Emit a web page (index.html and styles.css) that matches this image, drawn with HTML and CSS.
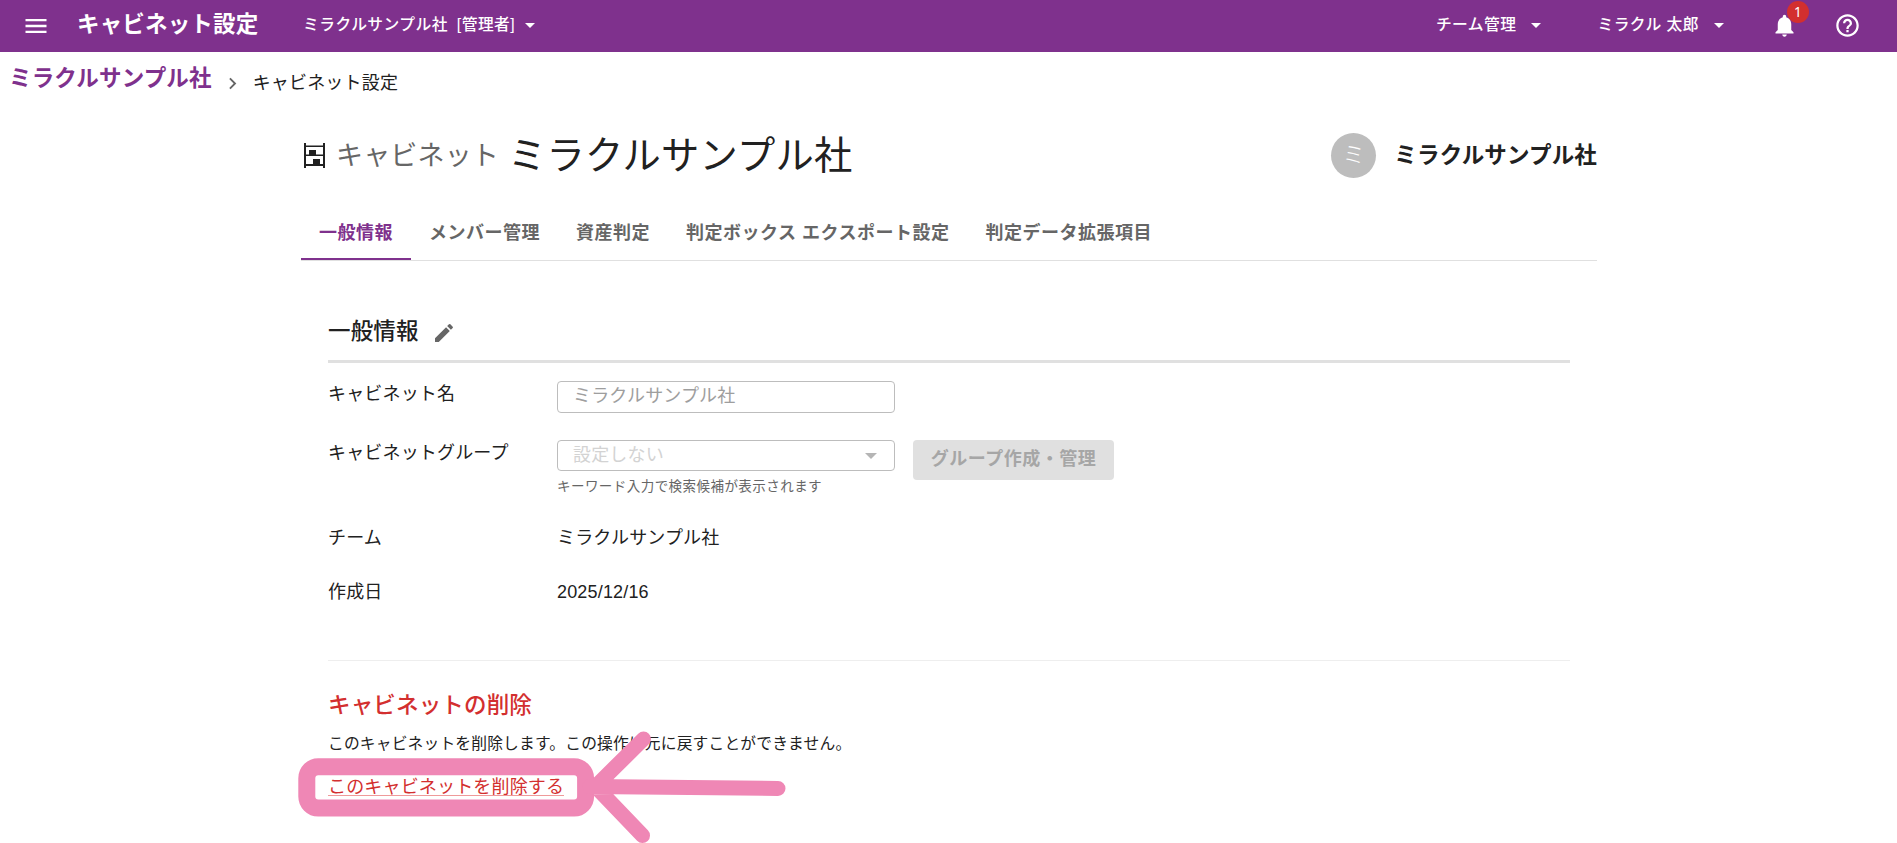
FILE: index.html
```
<!DOCTYPE html>
<html lang="ja">
<head>
<meta charset="utf-8">
<title>キャビネット設定</title>
<link rel="stylesheet" href="styles.css">
</head>
<body>
<header class="appbar">
  <svg class="menu-icon" viewBox="0 0 24 24"><path d="M3 18h18v-2H3v2zm0-5h18v-2H3v2zm0-7v2h18V6H3z"/></svg>
  <div class="app-title">キャビネット設定</div>
  <div class="nav-item account"><span>ミラクルサンプル社</span><span class="role">[管理者]</span><i class="caret"></i></div>
  <div class="nav-item team"><span>チーム管理</span><i class="caret"></i></div>
  <div class="nav-item user"><span>ミラクル 太郎</span><i class="caret"></i></div>
  <div class="bell">
    <svg viewBox="0 0 24 24"><path d="M12 22c1.1 0 2-.9 2-2h-4c0 1.1.89 2 2 2zm6-6v-5c0-3.07-1.64-5.64-4.5-6.32V4c0-.83-.67-1.5-1.5-1.5s-1.500.67-1.500 1.500v.68C7.63 5.36 6 7.92 6 11v5l-2 2v1h16v-1l-2-2z"/></svg>
    <span class="badge">1</span>
  </div>
  <svg class="help-icon" viewBox="0 0 24 24"><path d="M11 18h2v-2h-2v2zm1-16C6.48 2 2 6.48 2 12s4.48 10 10 10 10-4.48 10-10S17.52 2 12 2zm0 18c-4.41 0-8-3.59-8-8s3.59-8 8-8 8 3.59 8 8-3.59 8-8 8zm0-14c-2.21 0-4 1.79-4 4h2c0-1.1.9-2 2-2s2 .9 2 2c0 2-3 1.75-3 5h2c0-2.25 3-2.5 3-5 0-2.21-1.79-4-4-4z"/></svg>
</header>
<nav class="breadcrumbs">
  <a class="crumb-link">ミラクルサンプル社</a>
  <svg class="crumb-sep" viewBox="0 0 24 24"><path d="M10 6L8.59 7.41 13.17 12l-4.58 4.59L10 18l6-6z"/></svg>
  <span class="crumb-current">キャビネット設定</span>
</nav>
<main class="page">
  <div class="page-head">
    <svg class="cabinet-icon" viewBox="0 0 21 25"><path d="M0 0h2v25H0zM19 0h2v25h-2zM2 2.500h17v1.500H2zM2 11.500h17v1.500H2zM2 21h17v2H2zM5 7h7v5H5zM9 16h7v5H9z"/></svg>
    <span class="kind">キャビネット</span>
    <h1 class="name">ミラクルサンプル社</h1>
    <span class="avatar">ミ</span>
    <span class="owner">ミラクルサンプル社</span>
  </div>
  <div class="tabs">
    <div class="tab active">一般情報</div>
    <div class="tab">メンバー管理</div>
    <div class="tab">資産判定</div>
    <div class="tab">判定ボックス エクスポート設定</div>
    <div class="tab">判定データ拡張項目</div>
  </div>
  <section class="panel">
    <div class="section-head">
      <h2>一般情報</h2>
      <svg class="edit-icon" viewBox="0 0 24 24"><path d="M3 17.25V21h3.75L17.81 9.94l-3.75-3.75L3 17.25zM20.71 7.04c.39-.39.39-1.02 0-1.41l-2.34-2.34a.9959.9959 0 00-1.41 0l-1.83 1.83 3.75 3.75 1.83-1.83z"/></svg>
    </div>
    <div class="row row-name"><div class="label">キャビネット名</div><div class="field">ミラクルサンプル社</div></div>
    <div class="row row-group">
      <div class="label">キャビネットグループ</div>
      <div class="select-wrap">
        <div class="field select"><span>設定しない</span><i class="caret"></i></div>
        <div class="helper">キーワード入力で検索候補が表示されます</div>
      </div>
      <div class="button">グループ作成・管理</div>
    </div>
    <div class="row row-team"><div class="label">チーム</div><div>ミラクルサンプル社</div></div>
    <div class="row row-date"><div class="label">作成日</div><div>2025/12/16</div></div>
    <div class="danger">
      <h2>キャビネットの削除</h2>
      <p>このキャビネットを削除します。この操作は元に戻すことができません。</p>
      <a class="delete-link">このキャビネットを削除する</a>
    </div>
  </section>
</main>
<svg class="annotation" viewBox="0 0 500 123">
  <rect x="16.8" y="46.7" width="278.8" height="41.3" rx="11.5" stroke-width="17"/>
  <path d="M300 66.5L488 68.5M353.500 19L305.500 66.500L352.500 115.500" stroke-width="15"/>
</svg>
</body>
</html>
```
FILE: styles.css
```
* { box-sizing: border-box; }
body {
  margin: 0;
  height: 843px;
  overflow: hidden;
  background: #fff;
  color: #212121;
  font-family: "Liberation Sans", "Noto Sans CJK JP", sans-serif;
  font-size: 18px;
  line-height: 27px;
  letter-spacing: .17px;
}
h1, h2, p { margin: 0; }
svg { display: block; flex: none; fill: currentColor; }
.caret {
  flex: none;
  border: 5.5px solid transparent;
  border-top-color: currentColor;
  border-bottom: 0;
}
.appbar {
  display: flex;
  align-items: center;
  height: 52px;
  padding-left: 22px;
  background: #7f318d;
  color: #fff;
}
.menu-icon { width: 28px; height: 28px; }
.app-title { margin: -4px 0 0 27px; width: 226px; font-size: 22.5px; font-weight: 700; }
.nav-item { display: flex; align-items: center; height: 48px; margin-top: -4px; font-size: 15.75px; font-weight: 500; letter-spacing: .45px; white-space: nowrap; }
.nav-item .caret { margin-top: 3px; }
.role { margin: 0 10px 0 9px; }
.team { margin-left: auto; }
.team .caret { margin-left: 15px; }
.user { margin-left: 56px; }
.user .caret { margin-left: 15px; }
.bell { position: relative; margin: -2px 0 0 47px; }
.bell svg { width: 27px; height: 27px; }
.badge {
  position: absolute;
  left: 16px;
  top: -11px;
  width: 22px;
  height: 22px;
  border-radius: 50%;
  background: #d32f2f;
  font: 13.5px/22px "Noto Sans", sans-serif;
  text-align: center;
}
.help-icon { width: 27px; height: 27px; margin: -1px 36px 0; }
.breadcrumbs { display: flex; height: 64px; padding: 12px 0 0 9px; }
.crumb-link { color: #7f318d; font-size: 22.5px; line-height: 30px; font-weight: 700; }
.crumb-sep { width: 23px; height: 23px; margin: 8px 9px 0 9px; color: #666; }
.crumb-current { line-height: 38px; }
.page { width: 1296px; margin-left: 301px; }
.page-head { display: flex; align-items: center; height: 78px; }
.cabinet-icon { width: 21px; height: 25px; margin-left: 3px; }
.kind { margin: 2px 0 0 11px; color: #666; font-size: 27px; }
.name { margin: 2px 0 0 9px; font-size: 38.25px; line-height: 54px; font-weight: 400; letter-spacing: .28px; }
.avatar { width: 45px; height: 45px; margin-left: auto; border-radius: 50%; background: #bdbdbd; color: #fff; font-size: 22.5px; font-weight: 300; line-height: 45px; text-align: center; }
.owner { margin-left: 18px; font-size: 22.5px; font-weight: 700; }
.tabs { display: flex; height: 67px; border-bottom: 1px solid #e0e0e0; }
.tab { padding: 26px 18px 0; color: #666; font-weight: 700; letter-spacing: .5px; white-space: nowrap; }
.tab.active { color: #7f318d; border-bottom: 2px solid #7f318d; }
.panel { padding: 40px 27px 0; }
.section-head { display: flex; align-items: center; height: 62px; padding-top: 2px; border-bottom: 3px solid #e0e0e0; }
h2 { font-size: 22.5px; font-weight: 500; line-height: 30px; }
.edit-icon { width: 24px; height: 24px; margin: 2px 0 0 13px; color: #666; }
.row { display: flex; align-items: flex-start; }
.label { width: 229px; flex: none; }
.row-name { height: 59px; padding-top: 18px; }
.field { width: 338px; height: 32px; padding: 0 15px; border: 1px solid #bdbdbd; border-radius: 4px; color: #9e9e9e; line-height: 28px; }
.select { display: flex; align-items: center; justify-content: space-between; height: 31px; padding-right: 17px; color: #d3d3d3; }
.select span { margin-top: -2px; }
.select .caret { margin-top: 1px; border-width: 6px 6px 0; color: #b5b5b5; }
.row-group { height: 103px; padding-top: 18px; }
.helper { margin-top: 5px; color: #666; font-size: 13.5px; line-height: 22px; letter-spacing: .45px; }
.button { width: 201px; height: 40px; margin-left: 18px; border-radius: 4px; background: #e0e0e0; color: #a6a6a6; font-weight: 700; line-height: 38px; letter-spacing: .5px; text-align: center; }
.row-team { height: 54px; }
.row-date { height: 81px; }
.danger { border-top: 1px solid #eee; padding-top: 30px; }
.danger h2 { color: #d32f2f; }
.danger p { margin-top: 11px; font-size: 15.75px; line-height: 24px; }
.delete-link { display: inline-block; margin-top: 18px; color: #d32f2f; line-height: 26px; height: 22px; border-bottom: 1px solid #ef9a9a; }
.annotation { position: absolute; left: 290px; top: 720px; width: 500px; height: 123px; fill: none; stroke: #ef87b5; stroke-linecap: round; stroke-linejoin: round; }
```
